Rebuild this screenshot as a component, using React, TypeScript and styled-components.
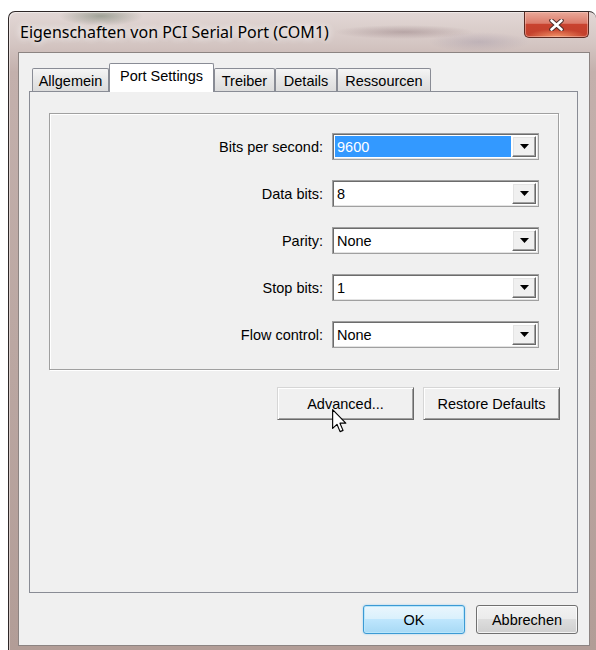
import React from 'react';
import styled, { createGlobalStyle } from 'styled-components';

interface Setting {
    label: string;
    value: string;
    selected?: boolean;
}

const tabs = [
    { title: 'Allgemein', width: 77 },
    { title: 'Port Settings', width: 105, active: true },
    { title: 'Treiber', width: 61 },
    { title: 'Details', width: 62 },
    { title: 'Ressourcen', width: 94 },
];

const settings: Setting[] = [
    { label: 'Bits per second:', value: '9600', selected: true },
    { label: 'Data bits:', value: '8' },
    { label: 'Parity:', value: 'None' },
    { label: 'Stop bits:', value: '1' },
    { label: 'Flow control:', value: 'None' },
];

function ComboBox({ value, selected }: { value: string; selected?: boolean }) {
    return (
        <Combo>
            <ComboField selected={selected}>{value}</ComboField>
            <DropButton>
                <svg width="9" height="5" viewBox="0 0 9 5">
                    <path d="M0 0h9L4.5 5z" fill="#000" />
                </svg>
            </DropButton>
        </Combo>
    );
}

function App() {
    return (
        <>
            <GlobalStyle />
            <Window>
                <TitleBar>
                    <Title>Eigenschaften von PCI Serial Port (COM1)</Title>
                    <CloseButton>
                        <svg width="15" height="12" viewBox="0 0 15 12">
                            <path
                                d="M2.5 1.5 L12.5 10.5 M12.5 1.5 L2.5 10.5"
                                stroke="#4a2a26"
                                strokeWidth="4.5"
                                strokeLinecap="round"
                            />
                            <path
                                d="M2.5 1.5 L12.5 10.5 M12.5 1.5 L2.5 10.5"
                                stroke="#fff"
                                strokeWidth="2.6"
                                strokeLinecap="round"
                            />
                        </svg>
                    </CloseButton>
                </TitleBar>
                <Client>
                    <TabStrip>
                        {tabs.map(t => (
                            <Tab key={t.title} active={t.active} width={t.width}>
                                {t.title}
                            </Tab>
                        ))}
                    </TabStrip>
                    <TabPanel>
                        <GroupBox>
                            {settings.map(s => (
                                <React.Fragment key={s.label}>
                                    <Label>{s.label}</Label>
                                    <ComboBox value={s.value} selected={s.selected} />
                                </React.Fragment>
                            ))}
                        </GroupBox>
                        <PanelButtons>
                            <ClassicButton>
                                Advanced...
                                <Pointer width="15" height="24" viewBox="0 0 13 21">
                                    <path
                                        d="M0.5 0.5 L0.5 17 L4.3 13.4 L7 19.8 L9.6 18.7 L6.9 12.4 L12 12.4 Z"
                                        fill="#fff"
                                        stroke="#000"
                                        strokeWidth="1"
                                        strokeLinejoin="round"
                                    />
                                </Pointer>
                            </ClassicButton>
                            <ClassicButton>Restore Defaults</ClassicButton>
                        </PanelButtons>
                    </TabPanel>
                    <DialogButtons>
                        <AeroButton primary>OK</AeroButton>
                        <AeroButton>Abbrechen</AeroButton>
                    </DialogButtons>
                </Client>
            </Window>
        </>
    );
}

const GlobalStyle = createGlobalStyle`
    html, body {
        margin: 0;
        padding: 0;
        background: #fff;
        overflow: hidden;
    }

    body {
        font-family: 'Liberation Sans', Arial, sans-serif;
        font-size: 14.5px;
        color: #000;
    }
`;

const Window = styled.div`
    box-sizing: border-box;
    width: 588px;
    height: 639px;
    margin: 11px 0 0 8px;
    padding: 0 6px 4px 9px;

    display: flex;
    flex-direction: column;

    border: 1px solid #2e2727;
    border-right: none;
    border-bottom: none;
    border-radius: 7px 7px 0 0;
    box-shadow: inset 1px 1px 0 rgba(255, 255, 255, 0.45);

    background: radial-gradient(ellipse 42px 10px at 92px 4px, rgba(96, 112, 92, 0.5), transparent),
        radial-gradient(ellipse 70px 7px at 395px 20px, rgba(120, 92, 98, 0.35), transparent),
        radial-gradient(ellipse 50px 10px at 470px 30px, rgba(150, 140, 160, 0.35), transparent),
        linear-gradient(to bottom, #e2d7d5 0, #d5c7c4 30px, #c3b0ac 60px, #b29d97 100%);
`;

const TitleBar = styled.div`
    height: 40px;
    padding: 0 1px 0 2px;

    display: flex;
    justify-content: space-between;
    align-items: flex-start;
`;

const Title = styled.span`
    margin-top: 10px;

    font-family: 'Noto Sans', 'Liberation Sans', sans-serif;
    font-size: 16px;
    line-height: 20px;
    color: #000;
    text-shadow: 0 0 6px rgba(255, 255, 255, 0.9), 0 0 10px rgba(255, 255, 255, 0.7);
`;

const CloseButton = styled.div`
    box-sizing: border-box;
    width: 65px;
    height: 26px;

    display: flex;
    justify-content: center;
    align-items: center;

    border: 1px solid #5c2a22;
    border-top: none;
    border-radius: 0 0 5px 5px;
    box-shadow: inset 0 0 0 1px rgba(255, 210, 200, 0.45);
    background: radial-gradient(ellipse 30px 8px at 50% 100%, rgba(255, 170, 120, 0.8), transparent),
        linear-gradient(to bottom, #e9a999 0, #dc7c6b 45%, #c8432f 50%, #c2402c 100%);
`;

const Client = styled.div`
    flex: 1;
    padding: 10px 11px 11px 10px;

    display: flex;
    flex-direction: column;

    border: 1px solid #8c8482;
    background: #f0f0f0;
`;

const TabStrip = styled.div`
    height: 28px;
    padding-left: 3px;

    display: flex;
    align-items: flex-end;
`;

const Tab = styled.div<{ active?: boolean; width: number }>`
    position: relative;
    z-index: ${props => (props.active ? 1 : 0)};
    box-sizing: border-box;
    width: ${props => props.width}px;
    height: ${props => (props.active ? 29 : 23)}px;
    margin-bottom: ${props => (props.active ? -1 : 0)}px;
    padding-top: 4px;

    text-align: center;
    line-height: 16px;
    white-space: nowrap;

    border: 1px solid #898c95;
    border-bottom: none;
    border-radius: 2px 2px 0 0;
    background: ${props => (props.active ? '#fff' : 'linear-gradient(to bottom, #f5f5f5, #e6e6e6 55%, #dcdcdc)')};
`;

const TabPanel = styled.div`
    flex: 1;
    padding: 21px 18px 0 19px;

    border: 1px solid #898c95;
    background: #f0f0f0;
`;

const GroupBox = styled.div`
    padding: 19px 19px 21px 0;

    display: grid;
    grid-template-columns: 1fr 207px;
    column-gap: 9px;
    row-gap: 20px;
    align-items: center;

    border: 1px solid #a0a0a0;
    box-shadow: inset 1px 1px 0 #fff, 1px 1px 0 #fff;
`;

const Label = styled.span`
    text-align: right;
    white-space: nowrap;
`;

const Combo = styled.div`
    box-sizing: border-box;
    height: 27px;
    padding: 2px;

    display: flex;

    border: 1px solid #a0a0a0;
    box-shadow: inset 1px 1px 0 #6c6c6c, inset -1px -1px 0 #e3e3e3;
    background: #fff;
`;

const ComboField = styled.div<{ selected?: boolean }>`
    flex: 1;
    padding-left: 2px;

    display: flex;
    align-items: center;

    color: ${props => (props.selected ? '#fff' : '#000')};
    background: ${props => (props.selected ? '#3399ff' : '#fff')};
`;

const DropButton = styled.div`
    box-sizing: border-box;
    width: 24px;
    margin-left: 1px;

    display: flex;
    justify-content: center;
    align-items: center;

    border: 1px solid;
    border-color: #fff #696969 #696969 #fff;
    box-shadow: inset -1px -1px 0 #a0a0a0, inset 1px 1px 0 #e3e3e3;
    background: #f0f0f0;
`;

const PanelButtons = styled.div`
    margin-top: 17px;
    margin-right: -1px;

    display: flex;
    justify-content: flex-end;
    gap: 9px;
`;

const ClassicButton = styled.button`
    position: relative;
    width: 137px;
    height: 33px;
    padding: 0;

    font: inherit;
    color: #000;

    border: 1px solid;
    border-color: #d6d6d6 #696969 #696969 #d6d6d6;
    box-shadow: inset 1px 1px 0 #fff, inset -1px -1px 0 #a0a0a0;
    background: #f0f0f0;
`;

const Pointer = styled.svg`
    position: absolute;
    left: 54px;
    top: 21px;
`;

const DialogButtons = styled.div`
    margin-top: 12px;

    display: flex;
    justify-content: flex-end;
    gap: 11px;
`;

const AeroButton = styled.button<{ primary?: boolean }>`
    width: 102px;
    height: 29px;
    padding: 0;

    font: inherit;
    color: #000;

    border: 1px solid ${props => (props.primary ? '#3c9ad4' : '#707070')};
    border-radius: 3px;
    box-shadow: ${props =>
        props.primary
            ? 'inset 0 0 0 1px #b9e6fb, 0 0 2px rgba(80, 180, 240, 0.6)'
            : 'inset 0 0 0 1px rgba(255, 255, 255, 0.75)'};
    background: ${props =>
        props.primary
            ? 'linear-gradient(to bottom, #eaf6fd 0, #d9f0fc 49%, #bee6fd 50%, #a7d9f5 100%)'
            : 'linear-gradient(to bottom, #f2f2f2 0, #ebebeb 49%, #dddddd 50%, #cfcfcf 100%)'};
`;

export default App;
